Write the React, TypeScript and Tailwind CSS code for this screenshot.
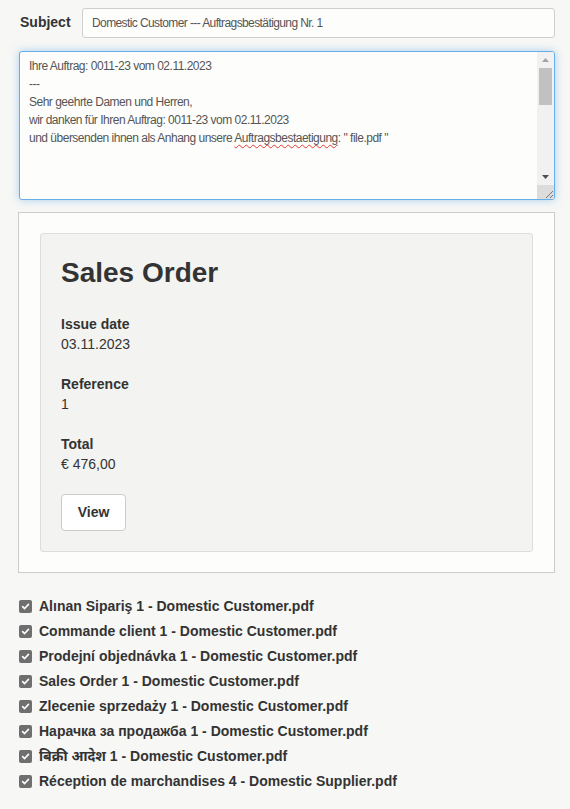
import React from "react";

const files = [
  "Alınan Sipariş 1 - Domestic Customer.pdf",
  "Commande client 1 - Domestic Customer.pdf",
  "Prodejní objednávka 1 - Domestic Customer.pdf",
  "Sales Order 1 - Domestic Customer.pdf",
  "Zlecenie sprzedaży 1 - Domestic Customer.pdf",
  "Нарачка за продажба 1 - Domestic Customer.pdf",
  "बिक्री आदेश 1 - Domestic Customer.pdf",
  "Réception de marchandises 4 - Domestic Supplier.pdf",
];

const lines = [
  "Ihre Auftrag: 0011-23 vom 02.11.2023",
  "---",
  "Sehr geehrte Damen und Herren,",
  "wir danken für Ihren Auftrag: 0011-23 vom 02.11.2023",
];

function Check() {
  return (
    <span className="flex h-[13px] w-[13px] shrink-0 items-center justify-center rounded-[2px] bg-[#6f6f6f]">
      <svg width="9" height="9" viewBox="0 0 10 10" fill="none">
        <path d="M1.8 5.2 L4 7.3 L8.3 2.6" stroke="white" strokeWidth="1.8" strokeLinecap="round" strokeLinejoin="round" />
      </svg>
    </span>
  );
}

function Field({ label, value }: { label: string; value: string }) {
  return (
    <div className="mb-5">
      <div className="text-[14px] font-bold leading-5 text-[#333]">{label}</div>
      <div className="text-[14px] leading-5 text-[#333]">{value}</div>
    </div>
  );
}

export default function App() {
  return (
    <div
      className="min-h-[809px] w-[570px] bg-[#f7f7f5] pt-2"
      style={{ fontFamily: '"Liberation Sans", Arial, "Noto Sans", sans-serif' }}
    >
      <div className="flex items-start pl-5 pr-[15px]">
        <div className="mt-[4px] w-[62px] text-[14px] font-bold leading-5 text-[#333]">Subject</div>
        <div className="flex h-[30px] flex-1 items-center rounded-[3px] border border-[#cfcfcf] bg-[#fdfdfb] pl-[9px] text-[12px] tracking-[-0.6px] text-[#555]">
          Domestic Customer --- Auftragsbestätigung Nr. 1
        </div>
      </div>

      <div className="pl-[18px] pr-[15px]">
        <div className="relative ml-px mt-[13px] h-[149px] overflow-hidden rounded-[3px] border border-[#66afe9] bg-[#fdfdfb] shadow-[0_0_8px_rgba(102,175,233,0.55)]">
          <div className="pl-[9px] pt-[5px] text-[12px] leading-[18px] tracking-[-0.5px] text-[#555]">
            {lines.map((l, i) => (
              <div key={i}>{l}</div>
            ))}
            <div>
              und übersenden ihnen als Anhang unsere{" "}
              <span className="underline decoration-[#e53935] decoration-wavy decoration-1 underline-offset-2">Auftragsbestaetigung</span>: " file.pdf "
            </div>
          </div>
          <div className="absolute right-0 top-0 flex h-full w-[17px] flex-col bg-[#f1f1f1]">
            <div className="flex h-[16px] items-center justify-center">
              <svg width="7" height="4" viewBox="0 0 7 4"><path d="M0 4 L3.5 0 L7 4 Z" fill="#a3a3a3" /></svg>
            </div>
            <div className="mx-[2px] h-[37px] bg-[#c1c1c1]" />
            <div className="flex-1" />
            <div className="flex h-[16px] items-center justify-center">
              <svg width="7" height="4" viewBox="0 0 7 4"><path d="M0 0 L7 0 L3.5 4 Z" fill="#505050" /></svg>
            </div>
            <div className="relative h-[14px] bg-[#dcdcdc]">
              <svg className="absolute bottom-0 right-0" width="10" height="10" viewBox="0 0 10 10">
                <path d="M9 2 L2 9 M9 6 L6 9" stroke="#777" strokeWidth="1" />
              </svg>
            </div>
          </div>
        </div>

        <div className="mt-[12px] border border-[#cccccc] bg-[#fdfdfb] px-[21px] pb-[20px] pt-[20px]">
          <div className="rounded-[3px] border border-[#dddddd] bg-[#f3f3f1] px-5 pb-5 pt-5">
            <div className="mb-[22px] text-[28px] font-bold leading-[38px] text-[#333]">Sales Order</div>
            <Field label="Issue date" value="03.11.2023" />
            <Field label="Reference" value="1" />
            <Field label="Total" value="€ 476,00" />
            <div className="flex h-[37px] w-[65px] items-center justify-center rounded-[4px] border border-[#cccccc] bg-white text-[14px] font-bold text-[#333]">
              View
            </div>
          </div>
        </div>
      </div>

      <div className="mt-[21px] flex flex-col pl-[19px]">
        {files.map((f) => (
          <div key={f} className="flex h-[25px] items-center gap-[7px]">
            <Check />
            <span
              className="text-[14px] font-bold text-[#333]"
              style={{ fontFamily: '"Liberation Sans", Arial, "Noto Sans", "Noto Sans Devanagari", sans-serif' }}
            >
              {f}
            </span>
          </div>
        ))}
      </div>
    </div>
  );
}
